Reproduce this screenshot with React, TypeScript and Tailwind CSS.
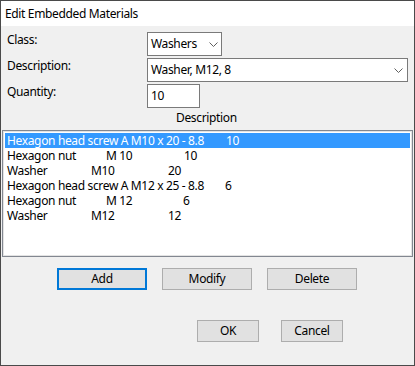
import React from "react";

const rows = [
  {
    selected: true,
    cells: [
      { text: "Hexagon head screw A M10 x 20 - 8.8", w: "w-[219px]" },
      { text: "10", w: "" },
    ],
  },
  {
    selected: false,
    cells: [
      { text: "Hexagon nut", w: "w-[99px]" },
      { text: "M 10", w: "w-[78px]" },
      { text: "10", w: "" },
    ],
  },
  {
    selected: false,
    cells: [
      { text: "Washer", w: "w-[84px]" },
      { text: "M10", w: "w-[77px]" },
      { text: "20", w: "" },
    ],
  },
  {
    selected: false,
    cells: [
      { text: "Hexagon head screw A M12 x 25 - 8.8", w: "w-[218px]" },
      { text: "6", w: "" },
    ],
  },
  {
    selected: false,
    cells: [
      { text: "Hexagon nut", w: "w-[99px]" },
      { text: "M 12", w: "w-[77px]" },
      { text: "6", w: "" },
    ],
  },
  {
    selected: false,
    cells: [
      { text: "Washer", w: "w-[84px]" },
      { text: "M12", w: "w-[77px]" },
      { text: "12", w: "" },
    ],
  },
];

function Chevron() {
  return (
    <svg width="9" height="5" viewBox="0 0 9 5" className="shrink-0">
      <polyline
        points="0.5,0.5 4.5,4.5 8.5,0.5"
        fill="none"
        stroke="#606060"
        strokeWidth="1"
      />
    </svg>
  );
}

function Button({
  label,
  w,
  focused,
}: {
  label: string;
  w: string;
  focused?: boolean;
}) {
  return (
    <div
      className={`${w} h-[22px] flex items-center justify-center bg-[#e1e1e1] ${
        focused ? "border-2 border-[#0078d7]" : "border border-[#adadad]"
      }`}
    >
      {label}
    </div>
  );
}

export default function App() {
  return (
    <div
      className="w-[415px] h-[366px] flex flex-col border border-[#4a4a4a] text-[12px] leading-[16px] tracking-[-0.35px] text-black"
      style={{ fontFamily: '"Noto Sans", "Segoe UI", sans-serif' }}
    >
      <div className="h-[25px] bg-white flex items-center pl-[4px] shrink-0">
        Edit Embedded Materials
      </div>
      <div className="flex-1 bg-[#f0f0f0] flex flex-col pt-[6px]">
        <div className="grid grid-cols-[140px_1fr] gap-y-[2px] pl-[6px] pr-[6px]">
          <div>Class:</div>
          <div className="w-[75px] h-[24px] bg-white border border-[#7a7a7a] flex items-center justify-between pl-[3px] pr-[3px]">
            <span>Washers</span>
            <Chevron />
          </div>
          <div>Description:</div>
          <div className="w-[261px] h-[24px] bg-white border border-[#7a7a7a] flex items-center justify-between pl-[3px] pr-[4px]">
            <span>Washer, M12, 8</span>
            <Chevron />
          </div>
          <div>Quantity:</div>
          <div className="w-[53px] h-[24px] bg-white border border-[#7a7a7a] flex items-center pl-[3px]">
            10
          </div>
        </div>
        <div className="mt-[2px] pl-[175px] h-[16px]">Description</div>
        <div className="mt-[4px] ml-[1px] w-[411px] h-[127px] border border-[#828790] bg-white">
          <div className="h-full border border-[#e3e3e3] pt-[1px] px-[1px] leading-[15px]">
            {rows.map((row, i) => (
              <div
                key={i}
                className={`h-[15px] flex items-center pl-[2px] whitespace-nowrap ${
                  row.selected ? "bg-[#3399ff] text-white" : ""
                }`}
              >
                {row.cells.map((c, j) => (
                  <span key={j} className={`${c.w} shrink-0`}>
                    {c.text}
                  </span>
                ))}
              </div>
            ))}
          </div>
        </div>
        <div className="mt-[11px] flex pl-[56px] gap-[15px]">
          <Button label="Add" w="w-[90px]" focused />
          <Button label="Modify" w="w-[90px]" />
          <Button label="Delete" w="w-[90px]" />
        </div>
        <div className="mt-[30px] flex pl-[196px] gap-[22px]">
          <Button label="OK" w="w-[62px]" />
          <Button label="Cancel" w="w-[62px]" />
        </div>
      </div>
    </div>
  );
}
